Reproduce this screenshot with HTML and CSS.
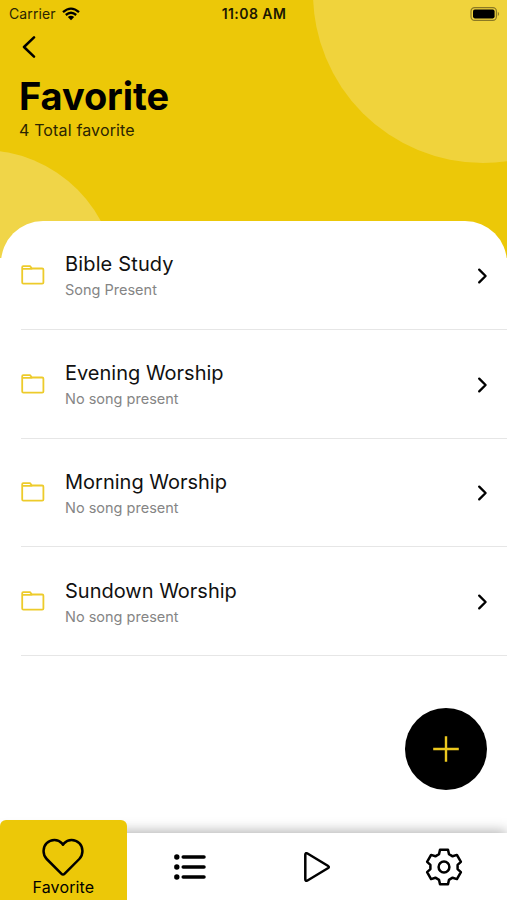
FILE: index.html
```
<!DOCTYPE html>
<html lang="en">
<head>
    <meta charset="utf-8" />
    <title>Favorite</title>
    <meta name="viewport" content="width=device-width, initial-scale=1.0">
    <link rel="stylesheet" href="styles.css">
</head>
<body>

<svg class="symbols" width="0" height="0">
    <symbol id="folder" viewBox="0 0 24 20">
        <path d="M1.2 5V2.2Q1.2 1.2 2.2 1.2H9L11 3.5H21.2Q22.4 3.5 22.4 4.7V17.4Q22.4 18.6 21.2 18.6H2.4Q1.2 18.6 1.2 17.4V4.8Q1.2 3.9 2.2 3.8H11" />
    </symbol>
    <symbol id="chevron" viewBox="0 0 12 18">
        <path d="M2.2 2.6L8.6 9L2.2 15.4" />
    </symbol>
</svg>

<header class="header">
    <div class="circle circle-top"></div>
    <div class="circle circle-bottom"></div>

    <div class="status-bar">
        <div class="carrier">
            <span>Carrier</span>
            <svg class="wifi" width="18" height="14" viewBox="0 0 18 14">
                <path d="M1 5.2Q9-2 17 5.2M3.8 8Q9 3.6 14.2 8" />
                <path class="solid" d="M5.8 9.9Q9 7.6 12.2 9.9L9 13.2Z" />
            </svg>
        </div>
        <div class="time">11:08 AM</div>
        <svg class="battery" width="31" height="14" viewBox="0 0 31 14">
            <rect class="shell" x="1" y=".6" width="25.4" height="12.8" rx="3.6" />
            <rect x="3" y="2.6" width="21.6" height="8.8" rx="1.8" />
            <path class="tip" d="M27.8 4.8Q30.4 7 27.8 9.2Z" />
        </svg>
    </div>

    <a class="back" href="#">
        <svg width="14" height="22" viewBox="0 0 14 22"><path d="M12 1.4L2 11L12 20.6" /></svg>
    </a>
    <h1>Favorite</h1>
    <p class="total">4 Total favorite</p>
</header>

<main class="sheet">
    <div class="row">
        <svg class="folder"><use href="#folder" /></svg>
        <div class="info">
            <h2 class="wide">Bible Study</h2>
            <p>Song Present</p>
        </div>
        <svg class="chevron"><use href="#chevron" /></svg>
    </div>
    <div class="row">
        <svg class="folder"><use href="#folder" /></svg>
        <div class="info">
            <h2>Evening Worship</h2>
            <p>No song present</p>
        </div>
        <svg class="chevron"><use href="#chevron" /></svg>
    </div>
    <div class="row">
        <svg class="folder"><use href="#folder" /></svg>
        <div class="info">
            <h2>Morning Worship</h2>
            <p>No song present</p>
        </div>
        <svg class="chevron"><use href="#chevron" /></svg>
    </div>
    <div class="row">
        <svg class="folder"><use href="#folder" /></svg>
        <div class="info">
            <h2>Sundown Worship</h2>
            <p>No song present</p>
        </div>
        <svg class="chevron"><use href="#chevron" /></svg>
    </div>
</main>

<button class="add">
    <svg width="28" height="28" viewBox="0 0 28 28"><path d="M14 1.2V26.8M1.2 14H26.8" /></svg>
</button>

<nav class="tabs">
    <a class="tab active" href="#">
        <svg width="42" height="38" viewBox="0 0 42 38">
            <path d="M21 36.6Q20.2 36.6 19.3 35.7L4.7 21C.5 16.6.5 9.4 4.7 5.2C8.9 1 15.9.6 20 5.4L21 6.8L22 5.4C26.1.6 33.1 1 37.3 5.2C41.5 9.4 41.5 16.6 37.3 21L22.7 35.7Q21.8 36.6 21 36.6Z" />
        </svg>
        <span>Favorite</span>
    </a>
    <a class="tab" href="#">
        <svg class="list" width="32" height="26" viewBox="0 0 32 26">
            <path d="M9.2 3H30M9.2 13H30M9.2 23H30" />
            <circle cx="2.8" cy="3" r="2.7" />
            <circle cx="2.8" cy="13" r="2.7" />
            <circle cx="2.8" cy="23" r="2.7" />
        </svg>
    </a>
    <a class="tab" href="#">
        <svg width="26" height="30" viewBox="0 0 26 30">
            <path d="M1.3 2.8Q1.3.4 3.5 1.5L23.8 13.7Q25.8 15 23.8 16.3L3.5 28.5Q1.3 29.6 1.3 27.2Z" />
        </svg>
    </a>
    <a class="tab" href="#">
        <svg class="gear" width="38" height="38" viewBox="0 0 38 38">
            <path d="M15 1.8H23L24 6.2L27.6 8.3L31.9 6.9L35.9 13.9L32.6 16.9V21.1L35.9 24.1L31.9 31.1L27.6 29.7L24 31.8L23 36.2H15L14 31.8L10.4 29.7L6.1 31.1L2.1 24.1L5.4 21.1V16.9L2.1 13.9L6.1 6.9L10.4 8.3L14 6.2Z" />
            <circle cx="19" cy="19" r="5.4" />
        </svg>
    </a>
</nav>

</body>
</html>
```
FILE: styles.css
```
* {
    margin: 0;
    padding: 0;
    box-sizing: border-box;
}

body {
    font-family: Inter, "Liberation Sans", sans-serif;
    background-color: #fff;
    color: #000;
    display: flex;
    flex-direction: column;
    height: 900px;
    overflow: hidden;
    position: relative;
}

svg {
    fill: none;
    stroke: #000;
    stroke-linecap: round;
    stroke-linejoin: round;
    flex-shrink: 0;
}

a {
    color: inherit;
    text-decoration: none;
}

.symbols {
    position: absolute;
}

.header {
    position: relative;
    height: 258px;
    flex-shrink: 0;
    background: #ecc808;
    overflow: hidden;
}

.circle {
    position: absolute;
    border-radius: 50%;
    background: #f0d33c;
}

.circle-top {
    width: 340px;
    height: 340px;
    left: 313px;
    top: -177px;
}

.circle-bottom {
    width: 270px;
    height: 270px;
    left: -153px;
    top: 150px;
    background: #f0d548;
}

.status-bar {
    position: relative;
    height: 27px;
    padding: 0 6px 0 9px;
    display: grid;
    grid-template-columns: 1fr auto 1fr;
    align-items: center;
    font-size: 14px;
}

.carrier {
    display: flex;
    align-items: center;
    gap: 6px;
    letter-spacing: 0.1px;
    color: #2b2502;
}

.wifi {
    stroke-width: 2.3;
    stroke-linecap: butt;
}

.wifi .solid {
    fill: #000;
    stroke: none;
}

.time {
    font-weight: 600;
    font-size: 14px;
    letter-spacing: 0.45px;
    margin-right: 2px;
    color: #1c1802;
}

.battery {
    justify-self: end;
    fill: #000;
    stroke: none;
}

.battery .shell {
    fill: none;
    stroke: #8b7924;
    stroke-width: 1.2;
}

.battery .tip {
    fill: #8b7924;
}

.back {
    position: relative;
    display: block;
    width: 14px;
    height: 22px;
    margin: 9px 0 0 22px;
}

.back svg {
    display: block;
    stroke-width: 2.5;
}

h1 {
    position: relative;
    margin: 14px 0 0 19px;
    font-size: 38px;
    line-height: 48px;
    font-weight: 700;
    letter-spacing: -0.1px;
}

.total {
    position: relative;
    margin: -1px 0 0 19px;
    font-size: 16px;
    line-height: 22px;
    letter-spacing: 0.15px;
    color: #2b2502;
}

.sheet {
    position: relative;
    margin: -37.5px 0 0 1px;
    background: #fff;
    border-radius: 42px 42px 0 0;
    padding: 0.5px 0 0 20px;
}

.row {
    display: flex;
    align-items: center;
    height: 108.8px;
    border-bottom: 1px solid #e6e6e6;
    padding-right: 18px;
}

.folder {
    width: 24px;
    height: 20px;
    stroke: #edcb2b;
    stroke-width: 1.8;
}

.info {
    flex: 1;
    margin: 3px 0 0 20px;
}

h2 {
    font-size: 20px;
    line-height: 28px;
    font-weight: 400;
    color: #111;
}

h2.wide {
    letter-spacing: 0.15px;
}

.info p {
    font-size: 14.5px;
    line-height: 24px;
    color: #858585;
}

.chevron {
    width: 12px;
    height: 18px;
    margin-top: 2px;
    stroke-width: 2.3;
}

.add {
    position: absolute;
    right: 20px;
    bottom: 110px;
    width: 82px;
    height: 82px;
    border: none;
    border-radius: 50%;
    background: #000;
    display: flex;
    align-items: center;
    justify-content: center;
}

.add svg {
    stroke: #ecc81e;
    stroke-width: 2.4;
    stroke-linecap: butt;
}

.tabs {
    display: grid;
    grid-template-columns: repeat(4, 1fr);
    height: 67px;
    margin-top: auto;
    background: #fff;
    box-shadow: 0 -2px 12px rgba(0, 0, 0, 0.3);
}

.tab {
    display: flex;
    flex-direction: column;
    align-items: center;
    justify-content: center;
}

.tab svg {
    stroke-width: 2.5;
}

.tab.active {
    background: #ecc808;
    margin: -13px 0 0 0;
    padding-top: 18px;
    justify-content: flex-start;
    border-radius: 6px 6px 0 0;
    font-size: 16px;
    line-height: 20px;
    letter-spacing: 0.15px;
}

.tab.active span {
    margin-top: 1px;
}

.tab .list {
    stroke-width: 3.5;
}

.list circle {
    fill: #000;
    stroke: none;
}
```
